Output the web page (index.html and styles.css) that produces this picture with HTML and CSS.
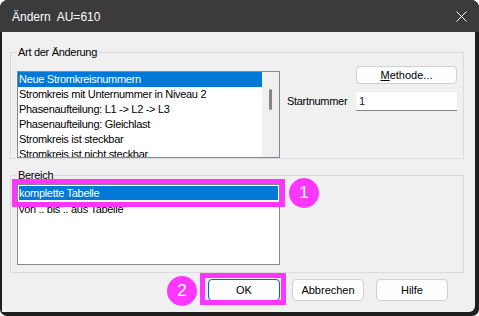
FILE: index.html
```html
<!DOCTYPE html>
<html lang="de">
<head>
    <meta charset="UTF-8">
    <title>Ändern AU=610</title>
    <link rel="stylesheet" href="styles.css">
</head>
<body>
    <div class="window">
        <div class="titlebar">
            <span class="title">Ändern  AU=610</span>
            <svg class="close" width="11" height="11" viewBox="0 0 11 11">
                <path d="M0.5 0.5 L10.5 10.5 M10.5 0.5 L0.5 10.5" stroke="#fff" stroke-width="1" fill="none"/>
            </svg>
        </div>
        <div class="client">
            <fieldset class="group group-art">
                <legend>Art der Änderung</legend>
                <div class="group-body">
                    <div class="listbox list-art">
                        <ul class="items">
                            <li class="selected">Neue Stromkreisnummern</li>
                            <li>Stromkreis mit Unternummer in Niveau 2</li>
                            <li>Phasenaufteilung: L1 -&gt; L2 -&gt; L3</li>
                            <li>Phasenaufteilung: Gleichlast</li>
                            <li>Stromkreis ist steckbar</li>
                            <li>Stromkreis ist nicht steckbar</li>
                        </ul>
                        <div class="scrollbar"><div class="thumb"></div></div>
                    </div>
                    <div class="side">
                        <button class="btn btn-method"><u>M</u>ethode...</button>
                        <div class="field">
                            <span>Startnummer</span>
                            <input class="input" type="text" value="1">
                        </div>
                    </div>
                </div>
            </fieldset>
            <fieldset class="group group-bereich">
                <legend>Bereich</legend>
                <div class="listbox list-bereich">
                    <ul class="items">
                        <li class="selected focused">komplette Tabelle</li>
                        <li>von .. bis .. aus Tabelle</li>
                    </ul>
                </div>
            </fieldset>
            <div class="buttons">
                <button class="btn btn-default">OK</button>
                <button class="btn">Abbrechen</button>
                <button class="btn">Hilfe</button>
            </div>
        </div>

        <!-- callouts -->
        <div class="mark mark-list"></div>
        <span class="badge badge-list">1</span>
        <div class="mark mark-ok"></div>
        <span class="badge badge-ok">2</span>
    </div>
</body>
</html>
```

FILE: styles.css
```css
* {
    box-sizing: border-box;
}
body {
    margin: 0;
    background-color: #fff;
    font-family: "Liberation Sans", Arial, sans-serif;
    font-size: 11px;
    letter-spacing: -0.3px;
    color: #000;
}
.window {
    position: relative;
    width: 479px;
    height: 316px;
    display: flex;
    flex-direction: column;
    background-color: #1f1f1f;
    border-radius: 8px 8px 7px 7px;
    overflow: hidden;
}
.titlebar {
    height: 32px;
    flex: none;
    display: flex;
    align-items: center;
    justify-content: space-between;
    padding: 0 12px;
    background-color: #3b3b3b;
    color: #fff;
}
.title {
    font-size: 12px;
    letter-spacing: 0;
    white-space: pre;
    margin-top: 1px;
}
.close {
    display: block;
}
.client {
    flex: 1;
    margin: 0 4px 4px 2px;
    padding: 13px 11px 0 8px;
    background-color: #f0f0f0;
    border-radius: 0 0 6px 0;
}
.group {
    margin: 0;
    min-width: 0;
    border: 1px solid #dcdcdc;
    padding: 7px 5px 0 6px;
}
.group legend {
    margin: 0;
    padding: 0 1px;
    line-height: 14px;
}
.group-body {
    display: flex;
    align-items: flex-start;
}
.listbox {
    background-color: #fff;
    border: 1px solid #828790;
    overflow: hidden;
}
.items {
    list-style: none;
    margin: 0;
    padding: 0;
    flex: 1;
    min-width: 0;
}
.items li {
    height: 15px;
    line-height: 15px;
    padding-left: 1px;
    white-space: nowrap;
    overflow: hidden;
}
.items li.selected {
    background-color: #0078d7;
    color: #fff;
}
.list-art {
    width: 263px;
    height: 87px;
    margin-top: 5px;
    display: flex;
}
.scrollbar {
    width: 17px;
    flex: none;
    background-color: #f0f0f0;
    display: flex;
    justify-content: center;
    padding-top: 17px;
}
.thumb {
    width: 3px;
    height: 21px;
    border-radius: 2px;
    background-color: #858585;
}
.side {
    flex: 1;
    margin-left: 7px;
    display: flex;
    flex-direction: column;
    align-items: flex-end;
}
.field {
    align-self: stretch;
    display: flex;
    align-items: center;
    justify-content: space-between;
    margin-top: 7px;
}
.input {
    width: 103px;
    height: 20px;
    border: 1px solid #ececec;
    border-bottom-color: #868686;
    border-radius: 2px;
    background-color: #fff;
    padding: 0 3px;
    font: inherit;
    color: #1b1640;
}
.btn {
    height: 22px;
    width: 72px;
    padding: 0;
    border: 1px solid #d0d0d0;
    border-radius: 4px;
    background-color: #fdfdfd;
    font: inherit;
    color: #000;
}
.btn-method {
    width: 101px;
    height: 18px;
    margin-right: 1px;
}
.btn-default {
    border-color: #0067c0;
}
.group-bereich {
    margin-top: 9px;
    padding: 2px 5px 7px 6px;
}
.list-bereich {
    width: 263px;
    height: 81px;
}
.list-bereich li {
    height: 16px;
    line-height: 16px;
}
.list-bereich li.focused {
    box-shadow: inset 0 0 0 1px #fff;
}
.buttons {
    display: flex;
    justify-content: flex-end;
    gap: 12px;
    margin-top: 6px;
    padding-right: 16px;
}

/* callouts over the dialog */
.mark {
    position: absolute;
    border: 5px solid #ff36ff;
}
.mark-list {
    left: 12px;
    top: 179px;
    width: 273px;
    height: 28px;
}
.mark-ok {
    left: 200px;
    top: 273px;
    width: 86px;
    height: 32px;
}
.badge {
    position: absolute;
    width: 30px;
    height: 30px;
    border-radius: 50%;
    background-color: #ff36ff;
    color: #fff;
    font-size: 17px;
    letter-spacing: 0;
    display: flex;
    align-items: center;
    justify-content: center;
}
.badge-list {
    left: 289px;
    top: 178px;
}
.badge-ok {
    left: 167px;
    top: 276px;
}
```
